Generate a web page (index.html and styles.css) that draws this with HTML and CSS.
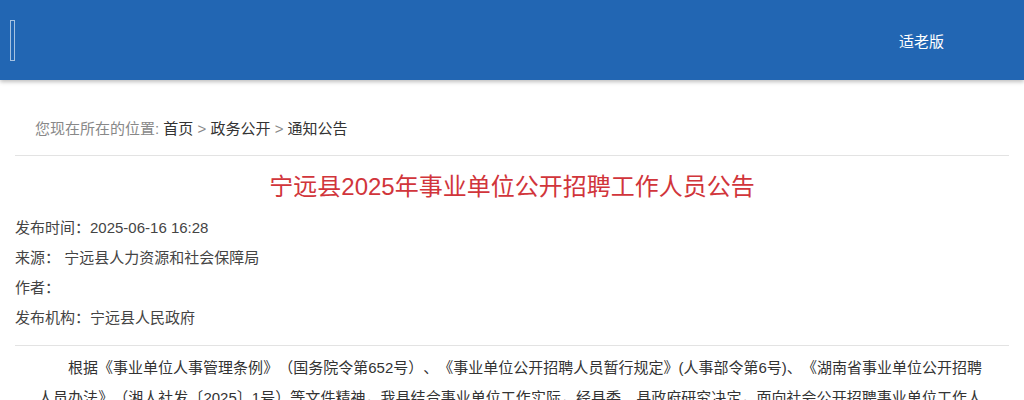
FILE: index.html
```html
<!DOCTYPE html>
<html lang="zh-CN">
<head>
    <meta charset="UTF-8">
    <meta name="viewport" content="width=device-width, initial-scale=1.0">
    <title>宁远县2025年事业单位公开招聘工作人员公告</title>
    <link rel="stylesheet" href="styles.css">
</head>
<body>
    <div class="header">
        <div class="search-box"></div>
        <a class="elder" href="#">适老版</a>
    </div>
    <div class="main">
        <div class="crumbs">
            <span class="here">您现在所在的位置:</span>
            <a href="#">首页</a> <span class="sep">&gt;</span>
            <a href="#">政务公开</a> <span class="sep">&gt;</span>
            <a href="#">通知公告</a>
        </div>
        <h1 class="title">宁远县2025年事业单位公开招聘工作人员公告</h1>
        <div class="info">
            <p>发布时间：2025-06-16 16:28</p>
            <p>来源：&nbsp;宁远县人力资源和社会保障局</p>
            <p>作者：</p>
            <p>发布机构：宁远县人民政府</p>
        </div>
        <div class="content">
            <p>根据《事业单位人事管理条例》（国务院令第652号）、《事业单位公开招聘人员暂行规定》(人事部令第6号)、《湖南省事业单位公开招聘人员办法》（湘人社发〔2025〕1号）等文件精神，我县结合事业单位工作实际，经县委、县政府研究决定，面向社会公开招聘事业单位工作人员。现将有关事项公告如下：</p>
        </div>
    </div>
</body>
</html>
```
FILE: styles.css
```css
body {
    margin: 0;
    font-family: "Liberation Sans", "Noto Sans CJK SC", sans-serif;
    color: #333;
    background: #fff;
    text-spacing-trim: space-all;
}
a {
    color: #333;
    text-decoration: none;
}
.header {
    height: 80px;
    background: #2266b3;
    box-shadow: 0 2px 4px rgba(0, 0, 0, 0.25);
    display: flex;
    align-items: center;
    padding: 0 80px 0 10px;
}
.search-box {
    width: 3px;
    height: 39px;
    border: 1px solid rgba(255, 255, 255, 0.6);
}
.elder {
    margin-left: auto;
    color: #fff;
    font-size: 15px;
}
.main {
    padding: 38px 15px 0;
}
.crumbs {
    padding: 0 20px 15px;
    font-size: 15px;
    line-height: 22px;
    border-bottom: 1px solid #e3e3e3;
}
.crumbs .here,
.crumbs .sep {
    color: #888;
}
.title {
    margin: 15px 0 10px;
    text-align: center;
    font-size: 24px;
    font-weight: normal;
    color: #d1353b;
    line-height: 32px;
}
.info {
    border-bottom: 1px solid #e3e3e3;
    padding-bottom: 12px;
}
.info p {
    margin: 0;
    font-size: 15px;
    line-height: 30px;
    color: #444;
}
.content {
    padding: 7px 27px 0 23px;
}
.content p {
    margin: 0;
    font-size: 15px;
    line-height: 30px;
    text-indent: 2em;
    text-align: justify;
    color: #333;
}
```
